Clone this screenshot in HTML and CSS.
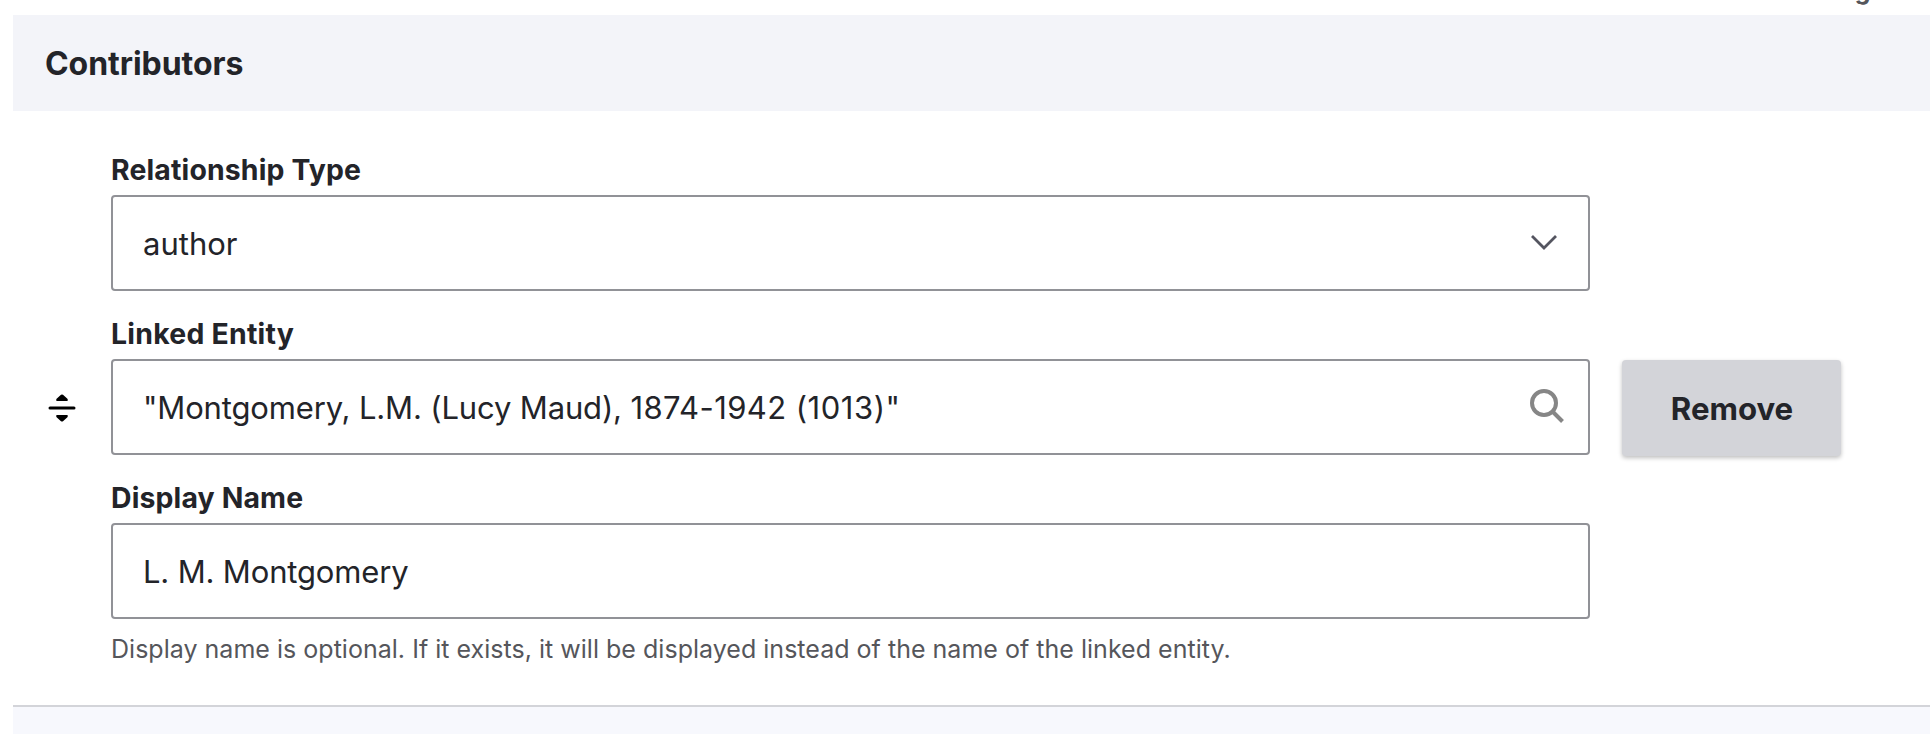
FILE: index.html
```
<!DOCTYPE html>
<html lang="en">
<head>
<meta charset="utf-8">
<title>Contributors</title>
<link rel="stylesheet" href="styles.css">
</head>
<body>
<div class="toolbar"><span class="weights-toggle">Show row weights</span></div>
<section class="field-table">
  <header class="table-header"><h4 class="table-title">Contributors</h4></header>
  <div class="table-row">
    <div class="drag-handle">
      <svg width="28" height="28" viewBox="0 0 28 28" aria-hidden="true">
        <path d="M13 .8Q14 0 15 .8L19.400 4.800Q20.600 7 18.800 7H9.200Q7.400 7 8.600 4.800ZM13 27.200Q14 28 15 27.200L19.400 23.200Q20.600 21 18.800 21H9.200Q7.400 21 8.600 23.200Z"/>
        <rect x=".5" y="12.500" width="27" height="3" rx="1.500"/>
      </svg>
    </div>
    <div class="fields">
      <div class="field">
        <div class="label label-type">Relationship Type</div>
        <div class="control select"><span class="value value-author">author</span>
          <svg class="chevron" width="28" height="18" viewBox="0 0 28 18" aria-hidden="true"><path d="M2 2L14 14L26 2" fill="none" stroke="#545560" stroke-width="2.800"/></svg>
        </div>
      </div>
      <div class="field">
        <div class="label label-entity">Linked Entity</div>
        <div class="control search"><span class="value value-entity">"Montgomery, L.M. (Lucy Maud), <span class="dates">1874-1942</span><span class="entity-id"> (1013)"</span></span>
          <svg class="magnifier" width="34" height="34" viewBox="0 0 34 34" aria-hidden="true"><g fill="none" stroke="#868686" stroke-width="4"><circle cx="14" cy="14" r="12"/><path d="M22.500 22.500L32.500 32.500"/></g></svg>
        </div>
      </div>
      <div class="field">
        <div class="label label-name">Display Name</div>
        <div class="control"><span class="value value-name">L. M. Montgomery</span></div>
        <div class="description">Display name is optional. If it exists, it will be displayed instead of the name of the linked entity.</div>
      </div>
    </div>
    <button class="remove" type="button"><span class="remove-text">Remove</span></button>
  </div>
  <div class="next-row"></div>
</section>
</body>
</html>
```
FILE: styles.css
```
* { box-sizing: border-box; }
body {
  margin: 0;
  height: 734px;
  overflow: hidden;
  background: #fff;
  color: #232429;
  font-family: Inter, "Liberation Sans", sans-serif;
}
.toolbar {
  height: 15px;
  overflow: hidden;
  display: flex;
  align-items: flex-end;
  justify-content: flex-end;
  padding: 0 21px 10px 0;
}
.weights-toggle { font-size: 25px; line-height: 30px; font-weight: 700; color: #55565b; }
.field-table { margin-left: 13px; }
.table-header {
  height: 96px;
  display: flex;
  align-items: center;
  padding: 2px 32px 0;
  background: #f3f4f9;
}
.table-title { margin: 0; font-size: 32px; line-height: 40px; font-weight: 700; letter-spacing: -.05px; }
.table-row { height: 594px; display: flex; padding: 42px 32px 0; }
.drag-handle { width: 66px; padding: 241px 0 0 3px; }
.drag-handle svg { display: block; }
.fields { width: 1479px; display: flex; flex-direction: column; gap: 26px; }
.label { height: 42px; font-size: 28.4px; line-height: 34px; font-weight: 700; letter-spacing: .15px; white-space: nowrap; }
.label-entity { letter-spacing: .25px; }
.control {
  height: 96px;
  display: flex;
  align-items: center;
  justify-content: space-between;
  padding: 0 30px;
  border: 2px solid #919297;
  border-radius: 4px;
}
.value { padding-top: 2px; font-size: 31px; line-height: 40px; white-space: nowrap; }
.value-entity { letter-spacing: -.15px; }
.dates { letter-spacing: .38px; }
.entity-id { letter-spacing: .55px; }
.value-name { letter-spacing: -.16px; }
.magnifier { margin: -3px -6px 0 0; }
.description { margin-top: 13px; font-size: 25px; line-height: 34px; letter-spacing: .02px; color: #55565b; white-space: nowrap; }
.remove {
  width: 219px;
  height: 96px;
  margin: 207px 0 0 32px;
  padding: 2px 0 0 1px;
  border: 0;
  border-radius: 4px;
  background: #d3d4d9;
  box-shadow: 0 2px 4px rgba(0, 0, 0, .25);
  color: #232429;
  font: 700 31.2px/40px Inter, "Liberation Sans", sans-serif;
}
.next-row { height: 29px; border-top: 2px solid #d3d4d9; background: #f7f8fd; }
```
